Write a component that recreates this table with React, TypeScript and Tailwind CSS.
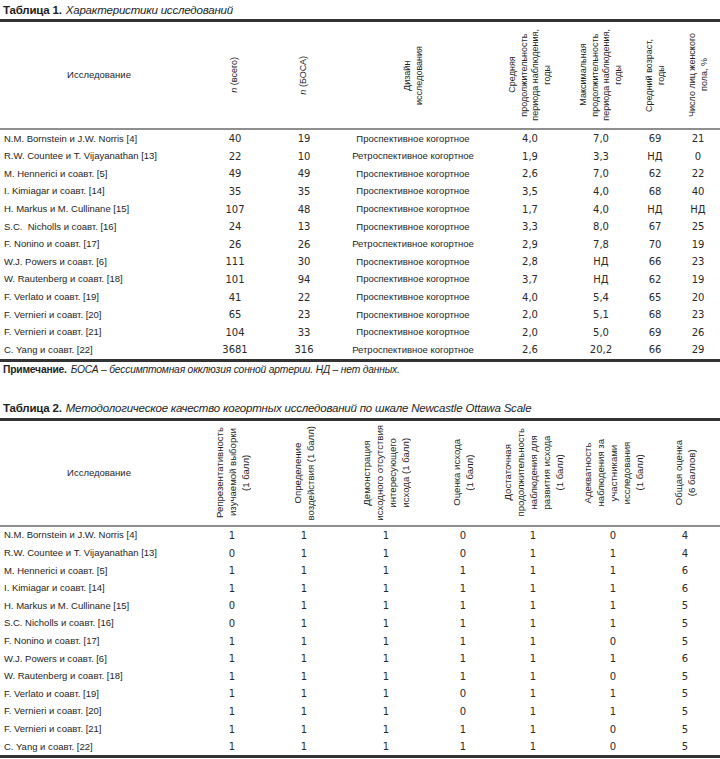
import React from "react";

const SANS = { fontFamily: '"Liberation Sans", Arial, sans-serif' };
const NUM = { fontFamily: '"DejaVu Sans", sans-serif' };

type T1Row = [string, string, string, string, string, string, string, string];

const t1Rows: T1Row[] = [
  ["N.M. Bornstein и J.W. Norris [4]", "40", "19", "Проспективное когортное", "4,0", "7,0", "69", "21"],
  ["R.W. Countee и T. Vijayanathan [13]", "22", "10", "Ретроспективное когортное", "1,9", "3,3", "НД", "0"],
  ["M. Hennerici и соавт. [5]", "49", "49", "Проспективное когортное", "2,6", "7,0", "62", "22"],
  ["I. Kimiagar и соавт. [14]", "35", "35", "Проспективное когортное", "3,5", "4,0", "68", "40"],
  ["H. Markus и M. Cullinane [15]", "107", "48", "Проспективное когортное", "1,7", "4,0", "НД", "НД"],
  ["S.C.  Nicholls и соавт. [16]", "24", "13", "Проспективное когортное", "3,3", "8,0", "67", "25"],
  ["F. Nonino и соавт. [17]", "26", "26", "Ретроспективное когортное", "2,9", "7,8", "70", "19"],
  ["W.J. Powers и соавт. [6]", "111", "30", "Проспективное когортное", "2,8", "НД", "66", "23"],
  ["W. Rautenberg и соавт. [18]", "101", "94", "Проспективное когортное", "3,7", "НД", "62", "19"],
  ["F. Verlato и соавт. [19]", "41", "22", "Проспективное когортное", "4,0", "5,4", "65", "20"],
  ["F. Vernieri и соавт. [20]", "65", "23", "Проспективное когортное", "2,0", "5,1", "68", "23"],
  ["F. Vernieri и соавт. [21]", "104", "33", "Проспективное когортное", "2,0", "5,0", "69", "26"],
  ["C. Yang и соавт. [22]", "3681", "316", "Ретроспективное когортное", "2,6", "20,2", "66", "29"],
];

const t2Rows: [string, number[]][] = [
  ["N.M. Bornstein и J.W. Norris [4]", [1, 1, 1, 0, 1, 0, 4]],
  ["R.W. Countee и T. Vijayanathan [13]", [0, 1, 1, 0, 1, 1, 4]],
  ["M. Hennerici и соавт. [5]", [1, 1, 1, 1, 1, 1, 6]],
  ["I. Kimiagar и соавт. [14]", [1, 1, 1, 1, 1, 1, 6]],
  ["H. Markus и M. Cullinane [15]", [0, 1, 1, 1, 1, 1, 5]],
  ["S.C. Nicholls и соавт. [16]", [0, 1, 1, 1, 1, 1, 5]],
  ["F. Nonino и соавт. [17]", [1, 1, 1, 1, 1, 0, 5]],
  ["W.J. Powers и соавт. [6]", [1, 1, 1, 1, 1, 1, 6]],
  ["W. Rautenberg и соавт. [18]", [1, 1, 1, 1, 1, 0, 5]],
  ["F. Verlato и соавт. [19]", [1, 1, 1, 0, 1, 1, 5]],
  ["F. Vernieri и соавт. [20]", [1, 1, 1, 0, 1, 1, 5]],
  ["F. Vernieri и соавт. [21]", [1, 1, 1, 1, 1, 0, 5]],
  ["C. Yang и соавт. [22]", [1, 1, 1, 1, 1, 0, 5]],
];

function VHead({ lines, small }: { lines: React.ReactNode[]; small?: boolean }) {
  return (
    <div className="flex h-full items-center justify-center">
      <div
        className={
          small
            ? "rotate-180 text-center text-[9px] leading-[11.5px] [writing-mode:vertical-rl]"
            : "rotate-180 text-center text-[9.6px] leading-[13px] [writing-mode:vertical-rl]"
        }
      >
        {lines.map((l, i) => (
          <div key={i} className="whitespace-nowrap">
            {l}
          </div>
        ))}
      </div>
    </div>
  );
}

function NameHead() {
  return (
    <div className="flex h-full items-center justify-center text-[9.5px]">Исследование</div>
  );
}

function Table1() {
  const cols = "grid grid-cols-[198px_74px_64px_154px_80px_62px_46px_40px]";
  return (
    <div>
      <div className="flex h-[19px] items-center px-[3px] pt-[2px] text-[11.5px] tracking-[-0.2px]">
        <span className="font-bold">Таблица 1.</span>
        <span className="ml-[4px] italic">Характеристики исследований</span>
      </div>
      <div className="border-t-[3px] border-[#333333]">
        <div className={`${cols} h-[108px] border-b-2 border-[#8f8f8f]`}>
          <NameHead />
          <VHead small lines={[<span key="a"><i>n</i> (всего)</span>]} />
          <VHead small lines={[<span key="a"><i>n</i> (БОСА)</span>]} />
          <VHead small lines={["Дизайн", "исследования"]} />
          <VHead small lines={["Средняя", "продолжительность", "периода наблюдения,", "годы"]} />
          <VHead small lines={["Максимальная", "продолжительность", "периода наблюдения,", "годы"]} />
          <VHead small lines={["Средний возраст,", "годы"]} />
          <VHead small lines={["Число лиц женского", "пола, %"]} />
        </div>
        <div className="border-b-[3px] border-[#333333]">
          {t1Rows.map((r, i) => (
            <div key={i} className={`${cols} h-[17.6px] items-center`}>
              <div className="whitespace-pre pl-[4px] text-[9.5px]">{r[0]}</div>
              <div className="text-center text-[10px] text-[#2a2a2a]" style={NUM}>{r[1]}</div>
              <div className="text-center text-[10px] text-[#2a2a2a]" style={NUM}>{r[2]}</div>
              <div className="text-center text-[9.5px]">{r[3]}</div>
              <div className="text-center text-[10px] text-[#2a2a2a]" style={NUM}>{r[4]}</div>
              <div className="text-center text-[10px] text-[#2a2a2a]" style={NUM}>{r[5]}</div>
              <div className="text-center text-[10px] text-[#2a2a2a]" style={NUM}>{r[6]}</div>
              <div className="text-center text-[10px] text-[#2a2a2a]" style={NUM}>{r[7]}</div>
            </div>
          ))}
        </div>
      </div>
      <div className="flex h-[16px] items-center px-[3px] text-[10.3px] tracking-[-0.2px]">
        <span className="font-bold">Примечание.</span>
        <span className="ml-[4px] italic">БОСА – бессимптомная окклюзия сонной артерии. НД – нет данных.</span>
      </div>
    </div>
  );
}

function Table2() {
  const cols = "grid grid-cols-[198px_68px_76px_88px_66px_74px_86px_58px]";
  return (
    <div className="mt-[22px]">
      <div className="flex h-[18px] items-center px-[3px] text-[11.5px] tracking-[-0.2px]">
        <span className="font-bold">Таблица 2.</span>
        <span className="ml-[4px] italic">
          Методологическое качество когортных исследований по шкале Newcastle Ottawa Scale
        </span>
      </div>
      <div className="border-t-[3px] border-[#333333]">
        <div className={`${cols} h-[106px] border-b-2 border-[#8f8f8f]`}>
          <NameHead />
          <VHead lines={["Репрезентативность", "изучаемой выборки", "(1 балл)"]} />
          <VHead lines={["Определение", "воздействия (1 балл)"]} />
          <VHead lines={["Демонстрация", "исходного отсутствия", "интересующего", "исхода (1 балл)"]} />
          <VHead lines={["Оценка исхода", "(1 балл)"]} />
          <VHead lines={["Достаточная", "продолжительность", "наблюдения для", "развития исхода", "(1 балл)"]} />
          <VHead lines={["Адекватность", "наблюдения за", "участниками", "исследования", "(1 балл)"]} />
          <VHead lines={["Общая оценка", "(6 баллов)"]} />
        </div>
        <div className="border-b-[3px] border-[#333333]">
          {t2Rows.map(([name, vals], i) => (
            <div key={i} className={`${cols} h-[17.6px] items-center`}>
              <div className="pl-[4px] text-[9.5px]">{name}</div>
              {vals.map((v, j) => (
                <div key={j} className="text-center text-[10px] text-[#2a2a2a]" style={NUM}>
                  {v}
                </div>
              ))}
            </div>
          ))}
        </div>
      </div>
    </div>
  );
}

export default function App() {
  return (
    <div className="w-[720px] bg-white text-[#1e1e1e]" style={SANS}>
      <Table1 />
      <Table2 />
    </div>
  );
}
